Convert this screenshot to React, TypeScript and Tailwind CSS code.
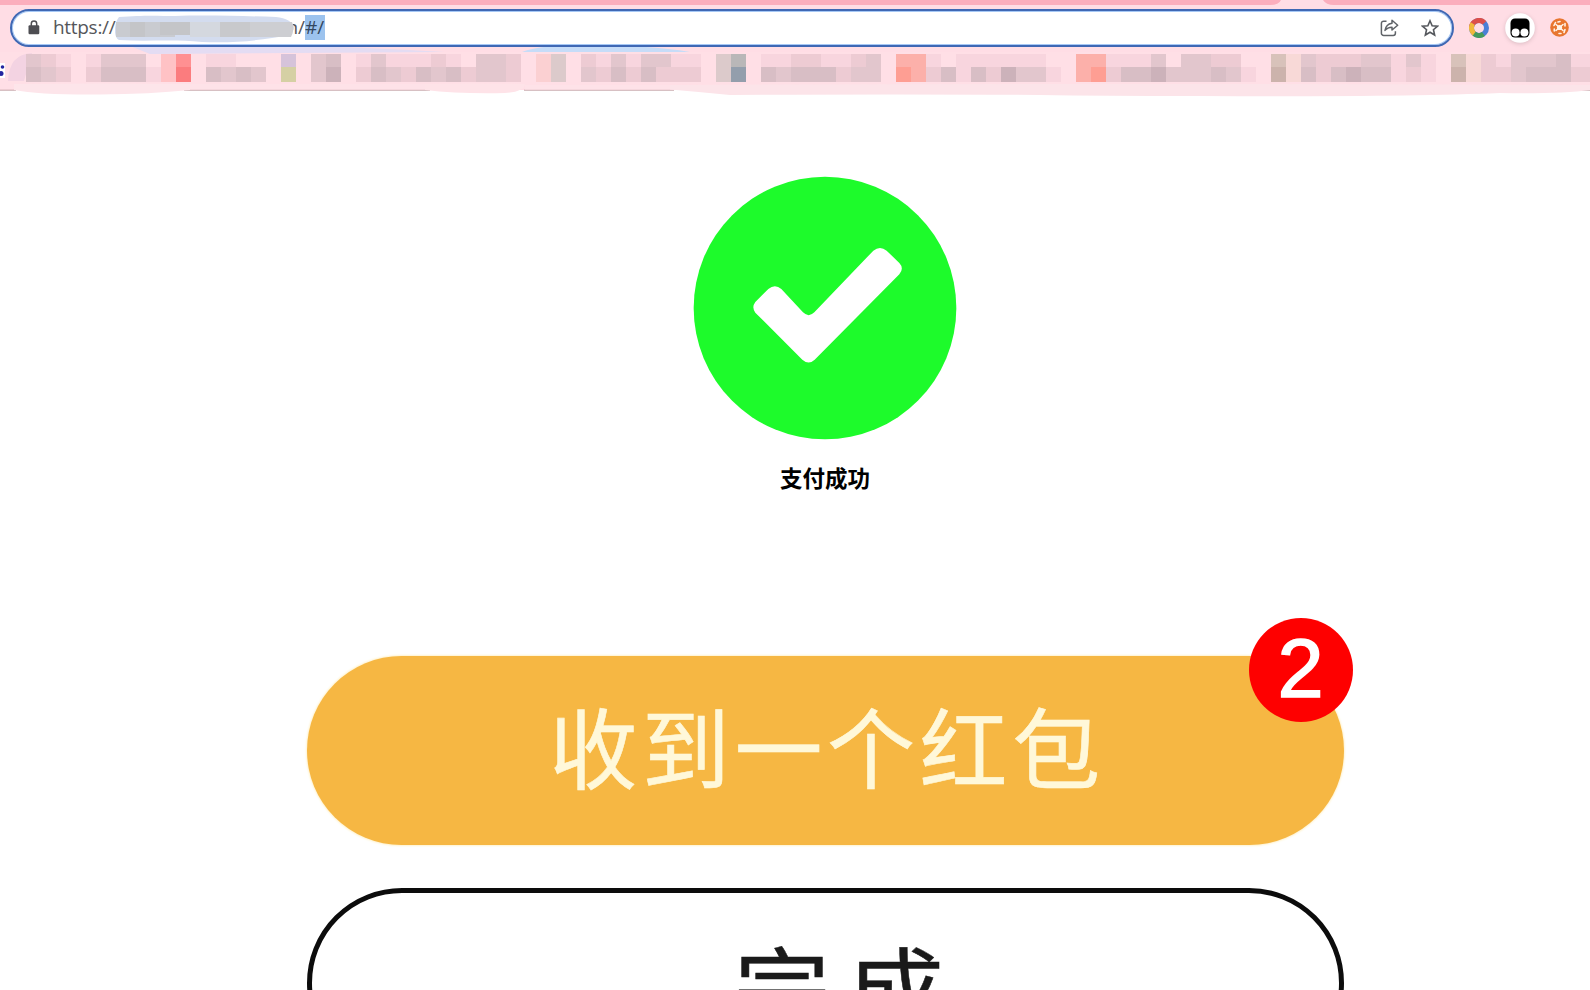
import React from 'react';

// one letter per 15px tile of the blurred bookmarks
const TONES: Record<string, string> = {
    '.': 'bg-transparent',
    a: 'bg-[#f8d5de]',
    b: 'bg-[#edcbd3]',
    c: 'bg-[#e2c6cd]',
    d: 'bg-[#d8bec5]',
    e: 'bg-[#ccb2ba]',
    p: 'bg-[#ffc2c5]',
    r: 'bg-[#ff9092]',
    R: 'bg-[#fb7c7e]',
    v: 'bg-[#d6c3da]',
    y: 'bg-[#d5d0a4]',
    k: 'bg-[#fbd0d2]',
    g: 'bg-[#dccacb]',
    h: 'bg-[#b9b7b8]',
    s: 'bg-[#939eac]',
    o: 'bg-[#fcb0aa]',
    O: 'bg-[#fe9e93]',
    t: 'bg-[#d8c2ba]',
    T: 'bg-[#ccb3ac]',
    n: 'bg-[#f8d9d7]',
};

const TOP_ROW = [
    '.cba.accc.',
    'pr.aa...v.',
    'cd.acaaaba',
    '.ccb.kg.ba',
    'caccaa.gh.',
    'aabbaabc.o',
    'oa.aaaaaa.',
    '.ooaaac.cc',
    'bb..tncbbb',
    'ccaca.tnba',
    'cccdaa',
].join('');

const BOTTOM_ROW = [
    '.dcb.bddda',
    'pR.dcdc.y.',
    'ce.bdcbdcd',
    'bccb.kg.cb',
    'dbdbbb.gs.',
    'dcdddbcc.O',
    'obdadbecca',
    '.oObddeccc',
    'dca.Tndbde',
    'ddaba.Tnbb',
    'cdddbb',
].join('');

const TileRow: React.FC<{ tiles: string; className: string }> = ({ tiles, className }) => (
    <div className={`flex ${className}`}>
        {tiles.split('').map((t, i) => (
            <div key={i} className={`w-[15px] shrink-0 ${TONES[t]}`} />
        ))}
    </div>
);

const LockIcon = () => (
    <svg width="12" height="15" viewBox="0 0 12 15" className="shrink-0">
        <path d="M3.3 6V3.8a2.7 2.7 0 0 1 5.4 0V6" fill="none" stroke="#4d4d52" strokeWidth="1.5" />
        <rect x="0.5" y="5.2" width="10.8" height="9" rx="1.2" fill="#4d4d52" />
    </svg>
);

const ShareIcon = () => (
    <svg width="20" height="18" viewBox="0 0 20 18" fill="none" stroke="#5f6368" strokeWidth="1.5" strokeLinejoin="round">
        <path d="M6.5 2.2H3.6a2.2 2.2 0 0 0-2.2 2.2v9.8a2.2 2.2 0 0 0 2.2 2.2h9.6a2.2 2.2 0 0 0 2.2-2.2v-2" />
        <path d="M12 1.3l5.7 4.9-5.7 4.8V8.2c-3 0-5.2.8-7 3.2.6-3.8 2.8-6.6 7-7.2z" />
    </svg>
);

const StarIcon = () => (
    <svg width="18" height="18" viewBox="0 0 18 18" fill="none" stroke="#55585d" strokeWidth="1.6">
        <path d="M9 1.8l2.15 4.9 5.35.5-4.05 3.55 1.2 5.25L9 13.25 4.35 16l1.2-5.25L1.5 7.2l5.35-.5z" />
    </svg>
);

const ColorRing = () => (
    <svg width="20" height="20" viewBox="0 0 20 20" fill="none" strokeWidth="5">
        <circle cx="10" cy="10" r="7.5" stroke="#4a7fd6" />
        <path d="M2.5 9A7.5 7.5 0 0 1 15.5 4.9" stroke="#dc4f4b" />
        <path d="M5.5 16A7.5 7.5 0 0 1 3.8 5.7" stroke="#f0b93c" />
        <path d="M14.5 16A7.5 7.5 0 0 1 5.2 15.8" stroke="#459b5b" />
    </svg>
);

const MonkeyIcon = () => (
    <svg width="30" height="32" viewBox="0 0 30 32" className="drop-shadow-sm">
        <circle cx="15" cy="15" r="14.8" fill="#fff" />
        <rect x="5.5" y="5.5" width="19" height="19" rx="4.5" fill="#000" />
        <circle cx="10.6" cy="19.5" r="4" fill="#fff" />
        <circle cx="19.4" cy="19.5" r="4" fill="#fff" />
    </svg>
);

const OrangeIcon = () => (
    <svg width="19" height="19" viewBox="0 0 19 19">
        <circle cx="9.5" cy="9.5" r="9.3" fill="#e8762f" />
        <g fill="none" stroke="#fff4e8" strokeWidth="1.6" strokeLinecap="round">
            <path d="M6 6.500l7 6M13 6.500l-7 6" />
            <path d="M4 7.500l1.500-3M8 4l2-.5M15 8v-2.500M4.300 13v-2M9 15.500h2M14 14.500l1-3" />
        </g>
        <circle cx="9.5" cy="9.5" r="2.6" fill="#fff4e8" />
    </svg>
);

const AddressBar = () => (
    <div className="flex h-[38px] w-[1444px] items-center rounded-full border-2 border-[#3f68b4] bg-white pl-[16px] pr-[13px] ring-1 ring-[#a6c8f5] ring-inset">
        <LockIcon />
        <div className="ml-[13px] flex flex-1 items-center pb-[1px] font-['Open_Sans','Noto_Sans',sans-serif] text-[19px] leading-[25px] text-[#55565a]">
            <span className="w-[62px] shrink-0 tracking-[-0.3px]">https://</span>
            <div className="relative flex w-[190px] shrink-0 justify-end">
                <span>n/</span>
                {/* smudge over the host name */}
                <svg width="180" height="28" viewBox="0 0 180 28" className="absolute top-0 left-0">
                    <path d="M4 2C30 0 45 1 60 1c30-1 70 0 101 1 10 1 17 5 18 10 0 7-8 9-22 11-20 3-40 5-70 4-30-3-55 0-83-2C-2 22-1 8 4 2z" fill="#d3dcef" />
                    <path d="M1 7h59v15H1z" fill="#c9cbd0" />
                    <path d="M15 7h15v15H15zM45 7h30v13H45z" fill="#c4c5c8" />
                    <path d="M75 7h30v15H75z" fill="#d4d8df" />
                    <path d="M105 7h30v15h-30z" fill="#c8c9cc" />
                    <path d="M135 7h42q3 8-1 15h-41z" fill="#cdced2" />
                </svg>
            </div>
            <span className="w-[20px] shrink-0 bg-[#9cc3ee] text-[#33475f]">#/</span>
        </div>
        <ShareIcon />
        <div className="ml-[21px] flex">
            <StarIcon />
        </div>
    </div>
);

const BrowserChrome = () => (
    <header className="relative h-[90px] shrink-0 bg-[#ffdde5]">
        {/* tab strip and uneven lower edge */}
        <svg width="1590" height="98" viewBox="0 0 1590 98" className="absolute top-0 left-0">
            <path d="M0 0H1281Q1279 5 1270 5H0zM1323 0H1590V5H1334Q1326 5 1323 0z" fill="#fbaebd" />
            <path d="M0 52H1590V89.5H0z" fill="#ffdfe6" />
            <path d="M0 90.2H16M184 90.2H430M524 90.2H674M1582 90.2H1590" stroke="#c5a4a9" />
            <path d="M14 84Q100 83 190 84V90Q150 94 100 94.5 40 95 14 90z" fill="#fde5ea" />
            <path d="M190 84H425V89.5H190z" fill="#fee2e8" />
            <path d="M425 84Q470 83 525 84 524 92 505 93 460 94 425 90z" fill="#fee3e8" />
            <path d="M525 85H675V89.5H525z" fill="#fee2e8" />
            <path d="M670 85Q1100 83 1590 85V90Q1560 94 1500 93 1400 97 1200 96 1100 96 1040 95 900 94 730 95 700 92 670 89.5z" fill="#fce4e9" />
            <path d="M130 46Q300 43 445 52L150 54z" fill="#e4dcf3" />
            <path d="M522 52Q540 45 580 45 650 45 690 52z" fill="#c6dcf8" />
            <path d="M8 81Q9 54 32 53L24 81z" fill="#f3d3e2" />
        </svg>
        <div className="relative flex h-[52px] items-center pt-[3px] pl-[10px]">
            <AddressBar />
            <div className="ml-[15px] flex items-center">
                <ColorRing />
                <div className="ml-[16px] pt-[2px]">
                    <MonkeyIcon />
                </div>
                <div className="ml-[15px]">
                    <OrangeIcon />
                </div>
            </div>
        </div>
        <div className="relative flex pt-[2px]">
            <svg width="11" height="28" viewBox="0 0 11 28" className="shrink-0">
                <path d="M0 9h5v15H0z" fill="#fff" />
                <circle cx="2.5" cy="13" r="1.8" fill="#2325a0" />
                <circle cx="1" cy="19.5" r="2.5" fill="#2325a0" />
            </svg>
            <div className="flex-1 overflow-hidden">
                <TileRow tiles={TOP_ROW} className="h-[13px]" />
                <TileRow tiles={BOTTOM_ROW} className="h-[15px]" />
            </div>
        </div>
    </header>
);

const SuccessMark = () => (
    <svg width="264" height="264" viewBox="41 49 792 792">
        <circle cx="437" cy="445" r="394" fill="#1dfb2b" />
        <path
            d="M228 427L267 388Q287 372 306 388L371 458Q388 475 405 458L582 273Q602 257 622 273L660 310Q675 326 660 344L406 600Q388 617 369 600L228 459Q216 443 228 427z"
            fill="#fff"
        />
    </svg>
);

const App: React.FC = () => {
    return (
        <div className="flex h-[990px] w-[1590px] flex-col overflow-hidden bg-white font-['Noto_Sans_CJK_SC',sans-serif]">
            <BrowserChrome />
            <main className="flex flex-col items-center pt-[86px] pl-[60px]">
                <SuccessMark />
                <h1 className="mt-[20px] text-[22.5px] leading-[34px] font-bold text-black">支付成功</h1>

                <div className="relative mt-[162px] flex h-[189px] w-[1037px] shrink-0 items-center justify-center rounded-full bg-[#f6b743] pb-[14px] shadow-[0_0_2px_1px_#fff3cf]">
                    <span className="pl-[4px] text-[88px] leading-[96px] tracking-[4.6px] text-[#fff8d9] [-webkit-text-stroke:0.6px_#fff8d9]">
                        收到一个红包
                    </span>
                    <span className="absolute -top-[38px] left-[942px] flex h-[104px] w-[104px] items-center justify-center rounded-full bg-[#fe0000] pb-[4px] font-['Liberation_Sans',sans-serif] text-[83px] leading-none text-white [-webkit-text-stroke:1.5px_white]">
                        2
                    </span>
                </div>

                <div className="mt-[43px] flex h-[190px] w-[1037px] shrink-0 justify-center rounded-full border-[5px] border-[#0c0c0c] pt-[40px] pl-[44px] text-[88px] leading-[100px] text-[#1a1a1a]">
                    <span className="scale-x-110 tracking-[15px] [-webkit-text-stroke:0.5px_#1a1a1a]">完成</span>
                </div>
            </main>
        </div>
    );
};

export default App;
